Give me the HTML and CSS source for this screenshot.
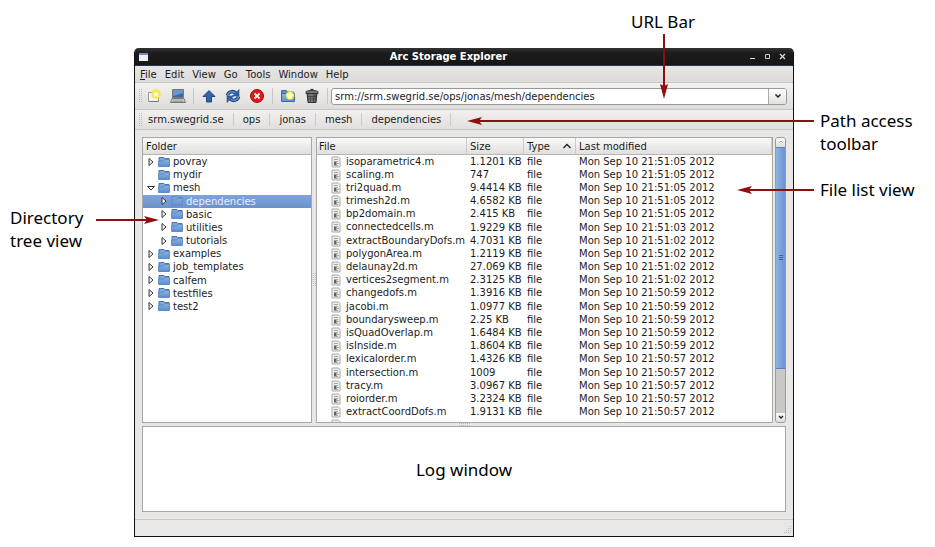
FILE: index.html
```html
<!DOCTYPE html>
<html lang="en">
<head>
<meta charset="utf-8">
<title>Arc Storage Explorer</title>
<link rel="stylesheet" href="styles.css">
</head>
<body>
<svg class="defs" aria-hidden="true">
  <defs>
    <linearGradient id="blue" x1="0" y1="0" x2="0" y2="1"><stop offset="0" stop-color="#8db3e2"/><stop offset="1" stop-color="#5a8dce"/></linearGradient>
    <linearGradient id="metal" x1="0" y1="0" x2="1" y2="0"><stop offset="0" stop-color="#444"/><stop offset=".4" stop-color="#aaa"/><stop offset="1" stop-color="#3c3c3c"/></linearGradient>
    <radialGradient id="glow"><stop offset="0" stop-color="#fff"/><stop offset=".35" stop-color="#fffbb0"/><stop offset=".7" stop-color="#f6e92c"/><stop offset="1" stop-color="#f6e92c" stop-opacity="0"/></radialGradient>
    <symbol id="folder" viewBox="0 0 12 12">
      <path d="M1 10V1.500h5l1 1h4V10z" fill="#7fa9de" stroke="#4674b3"/>
      <path d="M.6 10.500V5h5l1-1.500h4.800v7z" fill="url(#blue)" stroke="#5584c4" stroke-width=".8"/>
    </symbol>
    <symbol id="page" viewBox="0 0 10 12">
      <path d="M1 1h6.500L9 2.500V11H1z" fill="#ecede9" stroke="#a9aca6"/>
      <path d="M3 3.500h4M3 5.500h4M6 7.500h2M3 9.500h4" stroke="#a5a8a2"/>
      <path d="M3 6h2.500v3H3z" fill="#62655d"/>
    </symbol>
    <symbol id="closed" viewBox="0 0 8 10"><path d="M2 1.500v7l4-3.500z" fill="#fff" stroke="#333"/></symbol>
    <symbol id="open" viewBox="0 0 8 10"><path d="M.5 3.500h7L4 7z" fill="#fff" stroke="#333"/></symbol>
  </defs>
</svg>
<main class="figure">
  <section class="window">
    <header class="titlebar">
      <svg class="app-icon" viewBox="0 0 9 8"><path d="M0 0h9v8H0z" fill="#f0f0ee"/><path d="M0 0h9v2H0z" fill="#6a90c8"/></svg>
      <h1>Arc Storage Explorer</h1>
      <div class="controls">
        <button aria-label="Minimize"><svg viewBox="0 0 7 7"><path d="M1 5.500h5" stroke="#ddd" fill="none"/></svg></button>
        <button aria-label="Maximize"><svg viewBox="0 0 7 7"><path d="M1.500 1.500h4v4h-4z" stroke="#ccc" fill="none"/></svg></button>
        <button aria-label="Close"><svg viewBox="0 0 7 7"><path d="M1 1l5 5M6 1l-5 5" stroke="#ddd" stroke-width="1.200" fill="none"/></svg></button>
      </div>
    </header>
    <nav class="menubar">
      <button><u>F</u>ile</button><button>Edit</button><button>View</button><button>Go</button><button>Tools</button><button>Window</button><button>Help</button>
    </nav>
    <div class="toolbar">
      <span class="grip"></span>
      <button class="tool" aria-label="New"><svg viewBox="0 0 16 16"><path d="M2.500 4.500h10v9h-10z" fill="#f4f4f2" stroke="#999"/><path d="M3 13.500h9.500" stroke="#777"/><circle cx="10" cy="6" r="5.500" fill="url(#glow)"/><path d="M10 2l1.200 2.600 2.800.4-2 2 .5 3-2.500-1.500L7.500 10 8 7 6 5l2.800-.4z" fill="#fffde0" stroke="#eee02a" stroke-width=".7"/></svg></button>
      <button class="tool" aria-label="Computer"><svg viewBox="0 0 16 16"><path d="M2.500 1.500h11v8h-11z" fill="#3e68ac" stroke="#777"/><path d="M3 2h10v3L3 8z" fill="#6b93cd"/><path d="M2 10.500h12l1.500 4H.5z" fill="#d0d1cf" stroke="#777"/><path d="M3 12h10M2.500 13.500h11" stroke="#888" stroke-width=".7"/></svg></button>
      <span class="sep"></span>
      <button class="tool" aria-label="Up"><svg viewBox="0 0 16 16"><path d="M8 2.500l6 6h-3.500v5.500h-5V8.500H2z" fill="#3465a8" stroke="#204a87" stroke-linejoin="round"/></svg></button>
      <button class="tool" aria-label="Reload"><svg viewBox="0 0 16 16"><path d="M2.500 7.500C3 4 8 2 11 5.500M13.500 8.500C13 12 8 14 5 10.500" fill="none" stroke="#204a87" stroke-width="3.500"/><path d="M2.500 7.500C3 4 8 2 11 5.500M13.500 8.500C13 12 8 14 5 10.500" fill="none" stroke="#5f8fcb" stroke-width="1.500"/><path d="M14 1.500V8H7.500zM2 14.500V8h6.500z" fill="#3465a8" stroke="#204a87" stroke-width=".6"/></svg></button>
      <button class="tool" aria-label="Stop"><svg viewBox="0 0 16 16"><circle cx="8" cy="8" r="6.500" fill="#e01818" stroke="#b00808"/><path d="M5.500 5.500l5 5M10.500 5.500l-5 5" stroke="#fff" stroke-width="1.800"/></svg></button>
      <span class="sep"></span>
      <button class="tool" aria-label="New folder"><svg viewBox="0 0 16 16"><path d="M1.500 13V2.500h5l1 1.500h6V13z" fill="#5d8fd0" stroke="#3f6ca8"/><path d="M1.500 13.500v-8h13v8z" fill="url(#blue)" stroke="#3f6ca8"/><circle cx="10" cy="7.500" r="5" fill="url(#glow)"/><path d="M10 4l1 2.300 2.600.3-1.900 1.800.5 2.600L10 9.700 7.800 11l.5-2.600-1.900-1.800L9 6.300z" fill="#fffde0"/></svg></button>
      <button class="tool" aria-label="Delete"><svg viewBox="0 0 16 16"><path d="M3 5h10l-1 9.500H4z" fill="url(#metal)" stroke="#333"/><path d="M6 6l.5 8M8 6v8M10 6l-.5 8M4 8.500h8M4 11h8" stroke="#333" stroke-width=".7"/><path d="M2 5.500V4c0-1 2-1.500 6-1.500S14 3 14 4v1.500z" fill="#777" stroke="#333"/><path d="M6 2.500C6 .8 10 .8 10 2.500" fill="none" stroke="#333"/></svg></button>
      <span class="sep"></span>
      <div class="combo">
        <input type="text" aria-label="URL" value="srm://srm.swegrid.se/ops/jonas/mesh/dependencies">
        <button aria-label="Show history"><svg viewBox="0 0 8 8"><path d="M1.500 2.500L4 5l2.500-2.500" fill="none" stroke="#222" stroke-width="1.500"/></svg></button>
      </div>
    </div>
    <nav class="pathbar" aria-label="Path">
      <span class="grip"></span>
      <button>srm.swegrid.se</button><button>ops</button><button>jonas</button><button>mesh</button><button>dependencies</button>
    </nav>
    <div class="content">
      <div class="views">
        <section class="panel tree">
          <h2 class="tree-head">Folder</h2>
          <ul>
            <li><svg class="arrow"><use href="#closed"/></svg><svg class="folder"><use href="#folder"/></svg>povray</li>
            <li><svg class="arrow"></svg><svg class="folder"><use href="#folder"/></svg>mydir</li>
            <li><svg class="arrow"><use href="#open"/></svg><svg class="folder"><use href="#folder"/></svg>mesh</li>
            <li class="child selected"><svg class="arrow"><use href="#closed"/></svg><svg class="folder"><use href="#folder"/></svg>dependencies</li>
            <li class="child"><svg class="arrow"><use href="#closed"/></svg><svg class="folder"><use href="#folder"/></svg>basic</li>
            <li class="child"><svg class="arrow"><use href="#closed"/></svg><svg class="folder"><use href="#folder"/></svg>utilities</li>
            <li class="child"><svg class="arrow"><use href="#closed"/></svg><svg class="folder"><use href="#folder"/></svg>tutorials</li>
            <li><svg class="arrow"><use href="#closed"/></svg><svg class="folder"><use href="#folder"/></svg>examples</li>
            <li><svg class="arrow"><use href="#closed"/></svg><svg class="folder"><use href="#folder"/></svg>job_templates</li>
            <li><svg class="arrow"><use href="#closed"/></svg><svg class="folder"><use href="#folder"/></svg>calfem</li>
            <li><svg class="arrow"><use href="#closed"/></svg><svg class="folder"><use href="#folder"/></svg>testfiles</li>
            <li><svg class="arrow"><use href="#closed"/></svg><svg class="folder"><use href="#folder"/></svg>test2</li>
          </ul>
        </section>
        <div class="splitter"><span class="grip"></span></div>
        <section class="panel list">
          <table>
            <colgroup><col class="c-file"><col class="c-size"><col class="c-type"><col></colgroup>
            <thead><tr><th>File</th><th>Size</th><th><span class="sorted">Type<svg viewBox="0 0 8 6"><path d="M.5 5L4 1.500 7.500 5" fill="none" stroke="#222" stroke-width="1.300"/></svg></span></th><th>Last modified</th></tr></thead>
            <tbody id="files"></tbody>
          </table>
        </section>
        <div class="scrollbar">
          <button aria-label="Scroll up"><svg viewBox="0 0 8 8"><path d="M2 5l2-2 2 2" fill="none" stroke="#aaa"/></svg></button>
          <div class="thumb"><svg viewBox="0 0 4 6"><path d="M0 .5h4M0 2.500h4M0 4.500h4" stroke="#42679f"/></svg></div>
          <div class="track"></div>
          <button aria-label="Scroll down"><svg viewBox="0 0 8 8"><path d="M2 3l2 2 2-2" fill="none" stroke="#222" stroke-width="1.300"/></svg></button>
        </div>
      </div>
      <div class="hsplit"><span class="grip"></span></div>
      <section class="log"><p class="label">Log window</p></section>
    </div>
    <footer class="statusbar"><svg viewBox="0 0 8 8"><path d="M6 1h1v1H6zM4 3h1v1H4zM6 3h1v1H6zM2 5h1v1H2zM4 5h1v1H4zM6 5h1v1H6zM0 7h1v1H0zM2 7h1v1H2zM4 7h1v1H4zM6 7h1v1H6z" fill="#bbb"/></svg></footer>
  </section>

  <p class="label note url-note">URL Bar</p>
  <p class="label note path-note">Path access<br>toolbar</p>
  <p class="label note list-note">File list view</p>
  <p class="label note tree-note">Directory<br>tree view</p>
  <svg class="pointer url-pointer" viewBox="0 0 10 65"><path d="M5 0v56" stroke="#8f0f10" stroke-width="2"/><path d="M5 65L1 50l4 2 4-2z" fill="#8f0f10"/></svg>
  <svg class="pointer path-pointer" viewBox="0 0 347 10"><path d="M347 5H10" stroke="#8f0f10" stroke-width="2"/><path d="M0 5l15-4-3 4 3 4z" fill="#8f0f10"/></svg>
  <svg class="pointer list-pointer" viewBox="0 0 77 10"><path d="M77 5H10" stroke="#8f0f10" stroke-width="2"/><path d="M0 5l15-4-3 4 3 4z" fill="#8f0f10"/></svg>
  <svg class="pointer tree-pointer" viewBox="0 0 63 10"><path d="M0 5h54" stroke="#8f0f10" stroke-width="2"/><path d="M63 5L48 1l3 4-3 4z" fill="#8f0f10"/></svg>
</main>
<script src="files.js"></script>
</body>
</html>
```
FILE: files.js
```js
const files = [
  ["isoparametric4.m", "1.1201 KB", "51:05"],
  ["scaling.m", "747", "51:05"],
  ["tri2quad.m", "9.4414 KB", "51:05"],
  ["trimesh2d.m", "4.6582 KB", "51:05"],
  ["bp2domain.m", "2.415 KB", "51:05"],
  ["connectedcells.m", "1.9229 KB", "51:03"],
  ["extractBoundaryDofs.m", "4.7031 KB", "51:02"],
  ["polygonArea.m", "1.2119 KB", "51:02"],
  ["delaunay2d.m", "27.069 KB", "51:02"],
  ["vertices2segment.m", "2.3125 KB", "51:02"],
  ["changedofs.m", "1.3916 KB", "50:59"],
  ["jacobi.m", "1.0977 KB", "50:59"],
  ["boundarysweep.m", "2.25 KB", "50:59"],
  ["isQuadOverlap.m", "1.6484 KB", "50:59"],
  ["isInside.m", "1.8604 KB", "50:59"],
  ["lexicalorder.m", "1.4326 KB", "50:57"],
  ["intersection.m", "1009", "50:57"],
  ["tracy.m", "3.0967 KB", "50:57"],
  ["roiorder.m", "3.2324 KB", "50:57"],
  ["extractCoordDofs.m", "1.9131 KB", "50:57"]
];
const icon = '<svg class="page"><use href="#page"/></svg>';
document.getElementById("files").innerHTML = files.map(([name, size, time]) =>
  `<tr><td>${icon}${name}</td><td>${size}</td><td>file</td><td>Mon Sep 10 21:${time} 2012</td></tr>`
).join("") + `<tr><td>${icon}</td><td></td><td></td><td></td></tr>`;
```
FILE: styles.css
```css
* { box-sizing: border-box; }
body { margin: 0; background: #fff; color: #1c1c1c; font: 10px/13px "DejaVu Sans", sans-serif; }
h1, h2, p, ul { margin: 0; padding: 0; font-size: inherit; font-weight: inherit; }
button, input { font: inherit; color: inherit; margin: 0; padding: 0; border: 0; background: none; }
svg { display: block; flex: none; }
.defs { position: absolute; width: 0; height: 0; }

.figure { position: relative; display: flex; min-height: 100vh; padding: 48px 141px 10px 134px; }
.window { flex: 1; min-width: 0; display: flex; flex-direction: column; background: #e8e7e5; border: 1px solid #111; border-top-width: 0; border-radius: 5px 5px 0 0; }

.titlebar { display: flex; align-items: center; height: 18px; padding: 0 7px 0 4px; border-radius: 4px 4px 0 0; background: linear-gradient(#333, #1c1c1c 30%, #161616); border-bottom: 1px solid #26364f; color: #fff; }
.titlebar h1 { flex: 1; text-align: center; font-weight: bold; }
.app-icon { width: 9px; height: 8px; }
.controls { display: flex; justify-content: flex-end; gap: 8px; }
.controls svg { width: 7px; height: 7px; }

.menubar { display: flex; align-items: center; gap: 8px; height: 17px; padding-left: 5px; background: linear-gradient(#e8e7e5, #dcdbd9); border-bottom: 1px solid #c6c5c3; }
.toolbar { display: flex; align-items: center; height: 27px; padding: 0 6px 0 3px; background: linear-gradient(#f2f1f0, #dedddb); border-bottom: 1px solid #c6c5c3; }
.tool { width: 24px; display: flex; justify-content: center; }
.tool svg { width: 16px; height: 16px; }
.sep { width: 1px; height: 16px; margin: 0 3px; background: #c8c7c5; }
.grip { width: 4px; height: 14px; background: conic-gradient(#bcbbb9 25%, transparent 0) 0 0 / 2px 2px; }
.combo { flex: 1; min-width: 0; display: flex; height: 17px; border: 1px solid #999; border-radius: 3px; background: #fff; overflow: hidden; }
.combo input { flex: 1; min-width: 0; padding: 0 3px; }
.combo button { width: 18px; display: flex; align-items: center; justify-content: center; border-left: 1px solid #aaa; background: linear-gradient(#fff, #e2e1df); }
.combo svg { width: 8px; height: 8px; }

.pathbar { display: flex; align-items: center; height: 20px; padding-left: 3px; background: linear-gradient(#f2f1f0, #e0dfdd); border-bottom: 1px solid #c6c5c3; }
.pathbar button { padding: 0 9px; height: 13px; line-height: 13px; border-right: 1px solid #cccbc9; }
.pathbar button:nth-of-type(1) { padding-left: 6px; }

.content { flex: 1; display: flex; flex-direction: column; padding: 7px; }
.views { display: flex; height: 286px; }
.panel { background: #fff; border: 1px solid #a8a7a5; overflow: hidden; }
.tree { width: 170px; }
.tree-head, th { height: 17px; background: linear-gradient(#fafafa, #e0dfdd); border-bottom: 1px solid #b6b5b3; }
.tree-head { padding: 2px 3px; }
.tree ul { list-style: none; display: grid; grid-auto-rows: 1fr; height: 158px; }
.tree li { display: flex; align-items: center; padding-left: 4px; }
.tree .child { padding-left: 17px; }
.tree .selected { background: linear-gradient(#7ea3dc, #6c92cd); color: #e8effa; }
.selected .folder { opacity: .6; }
.arrow { width: 8px; height: 10px; }
.folder { width: 12px; height: 12px; margin: 0 3px; }
.splitter { width: 4px; display: flex; align-items: center; }
.list { flex: 1; min-width: 0; }
table { width: 100%; height: 294px; border-collapse: separate; border-spacing: 0; table-layout: fixed; }
.c-file { width: 150px; }
.c-size { width: 57px; }
.c-type { width: 52px; }
th { text-align: left; font-weight: normal; padding: 0 2px; border-right: 1px solid #cbcac8; }
th + th { padding: 0 3px; }
td { padding: 0 3px; white-space: nowrap; line-height: 12px; }
td:first-child { display: flex; align-items: center; height: 13px; padding: 0 0 0 14px; }
.sorted { display: flex; justify-content: space-between; align-items: center; }
.sorted svg { width: 8px; height: 6px; margin-right: 1px; }
.page { width: 10px; height: 12px; margin-right: 5px; }
.scrollbar { width: 11px; margin-left: 2px; display: flex; flex-direction: column; border: 1px solid #9c9b99; border-radius: 3px; background: #c9c8c6; overflow: hidden; }
.scrollbar button { height: 9px; display: flex; justify-content: center; background: linear-gradient(#fafafa, #dfdedc); }
.scrollbar button svg { width: 8px; height: 8px; }
.thumb { flex: 222; display: flex; align-items: center; justify-content: center; border: 1px solid #5c81bb; border-width: 1px 0; background: linear-gradient(90deg, #8fb2e6, #6a92d0); }
.thumb svg { width: 4px; height: 6px; }
.track { flex: 44; }
.hsplit { height: 3px; display: flex; justify-content: center; }
.hsplit .grip { width: 12px; height: 3px; }
.log { flex: 1; display: flex; align-items: center; justify-content: center; background: #fff; border: 1px solid #a8a7a5; }
.statusbar { height: 17px; display: flex; justify-content: flex-end; align-items: flex-end; padding: 0 1px 3px; border-top: 1px solid #c9c8c6; }
.statusbar svg { width: 8px; height: 8px; }

.label { color: #000; font: 17px/23px "Noto Sans", sans-serif; }
.note, .pointer { position: absolute; }
.url-note { left: 631px; top: 10px; }
.path-note { left: 820px; top: 109px; }
.list-note { left: 820px; top: 178px; }
.tree-note { left: 10px; top: 206px; }
.url-pointer { left: 659px; top: 34px; width: 10px; height: 65px; }
.path-pointer { left: 467px; top: 116px; width: 347px; height: 10px; }
.list-pointer { left: 737px; top: 185px; width: 77px; height: 10px; }
.tree-pointer { left: 96px; top: 215px; width: 63px; height: 10px; }
```
